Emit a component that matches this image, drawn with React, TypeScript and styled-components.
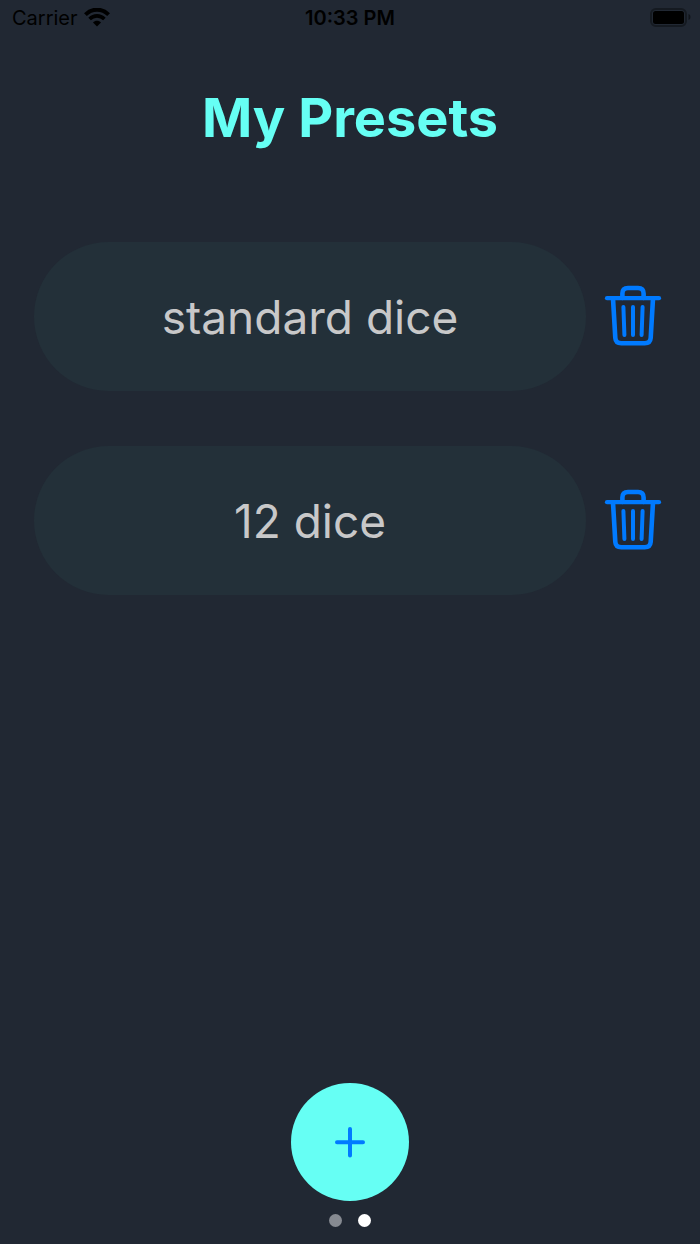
import React from "react";
import styled, { createGlobalStyle } from "styled-components";

const GlobalStyle = createGlobalStyle`
  *, *::before, *::after { box-sizing: border-box; }
  body {
    margin: 0;
    background: #212833;
    font-family: Inter, "Liberation Sans", sans-serif;
  }
  button {
    border: 0;
    padding: 0;
    font: inherit;
    cursor: pointer;
  }
  svg { display: block; }
`;

const Screen = styled.div`
  display: flex;
  flex-direction: column;
  min-height: 100vh;
  background: #212833;
`;

const StatusBar = styled.header`
  display: grid;
  grid-template-columns: 1fr auto 1fr;
  align-items: center;
  height: 36px;
  padding: 0 8px;
  color: #000;
  font-size: 20px;
  line-height: 24px;
`;

const Carrier = styled.div`
  display: flex;
  align-items: center;
  gap: 6px;
  padding-left: 4px;
`;

const Clock = styled.time`
  font-weight: 600;
`;

const BatterySlot = styled.div`
  justify-self: end;
`;

const Title = styled.h1`
  margin: 48px 0 0;
  color: #66fff4;
  font-size: 54px;
  font-weight: 700;
  line-height: 68px;
  text-align: center;
`;

const PresetList = styled.ul`
  display: flex;
  flex-direction: column;
  gap: 55px;
  margin: 90px 0 54px;
  padding: 0 38px 0 34px;
  list-style: none;
`;

const PresetRow = styled.li`
  display: flex;
  align-items: center;
  gap: 18px;
`;

const PresetButton = styled.button`
  flex: 1;
  min-width: 0;
  height: 149px;
  border-radius: 75px;
  background: #233039;
  color: #c8c8c9;
  font-size: 46px;
  line-height: 58px;
`;

const DeleteButton = styled.button`
  flex: none;
  background: none;
  color: #007aff;
`;

const Footer = styled.footer`
  display: flex;
  flex-direction: column;
  align-items: center;
  gap: 13px;
  margin-top: auto;
  padding-bottom: 17px;
`;

const AddButton = styled.button`
  display: grid;
  place-items: center;
  width: 118px;
  height: 118px;
  border-radius: 50%;
  background: #66fff4;
  color: #007aff;
`;

const PageDots = styled.nav`
  display: flex;
  gap: 16px;
`;

const Dot = styled.button<{ $active?: boolean }>`
  width: 13px;
  height: 13px;
  border-radius: 50%;
  background: ${(p) => (p.$active ? "#ffffff" : "#868a91")};
`;

function WifiIcon() {
  return (
    <svg width="26" height="20" viewBox="0 0 26 20" fill="none" aria-hidden="true">
      <path d="M1.4 6.6C8 0 18 0 24.6 6.6" stroke="currentColor" strokeWidth="4" />
      <path d="M5.6 11c4.2-4.2 10.6-4.2 14.8 0" stroke="currentColor" strokeWidth="3.6" />
      <path d="M9 14.4c2-2.3 6-2.3 8 0L13 18.4z" fill="currentColor" />
    </svg>
  );
}

function BatteryIcon() {
  return (
    <svg width="42" height="20" viewBox="0 0 42 20" fill="none" role="img" aria-label="Battery full">
      <rect x="1" y="1" width="35" height="17" rx="5" stroke="#151a21" strokeWidth="2" />
      <rect x="3" y="3" width="31" height="13" rx="2.5" fill="#000" />
      <path d="M38.5 6c2.6.6 2.6 5.4 0 6z" fill="#11151b" />
    </svg>
  );
}

function TrashIcon() {
  return (
    <svg
      width="58"
      height="63"
      viewBox="0 0 58 63"
      fill="none"
      stroke="currentColor"
      strokeWidth="4.6"
      strokeLinecap="round"
      strokeLinejoin="round"
      aria-hidden="true"
    >
      <path d="M3 13.2h52" strokeWidth="4.2" />
      <path d="M18.4 13V8.6q0-5.6 5.6-5.6h10q5.6 0 5.6 5.6V13" />
      <path d="M9 13.5l2.3 39.4q.4 5.4 6 5.4h23.400q5.600 0 6-5.400L49 13.500" />
      <path d="M19.400 22l1 28M29 22v28M38.600 22l-1 28" strokeWidth="4" />
    </svg>
  );
}

function PlusIcon() {
  return (
    <svg width="32" height="32" viewBox="0 0 32 32" fill="none" aria-hidden="true">
      <path d="M16 3v26.5M3 16.300h26" stroke="currentColor" strokeWidth="4" strokeLinecap="round" />
    </svg>
  );
}

const presets = ["standard dice", "12 dice"];

export default function App() {
  return (
    <Screen>
      <GlobalStyle />
      <StatusBar>
        <Carrier>
          <span>Carrier</span>
          <WifiIcon />
        </Carrier>
        <Clock>10:33 PM</Clock>
        <BatterySlot>
          <BatteryIcon />
        </BatterySlot>
      </StatusBar>
      <main>
        <Title>My Presets</Title>
        <PresetList>
          {presets.map((name) => (
            <PresetRow key={name}>
              <PresetButton type="button">{name}</PresetButton>
              <DeleteButton type="button" aria-label={`Delete ${name}`}>
                <TrashIcon />
              </DeleteButton>
            </PresetRow>
          ))}
        </PresetList>
      </main>
      <Footer>
        <AddButton type="button" aria-label="Add preset">
          <PlusIcon />
        </AddButton>
        <PageDots aria-label="Pages">
          <Dot type="button" aria-label="Page 1" />
          <Dot type="button" aria-label="Page 2" aria-current="page" $active />
        </PageDots>
      </Footer>
    </Screen>
  );
}
